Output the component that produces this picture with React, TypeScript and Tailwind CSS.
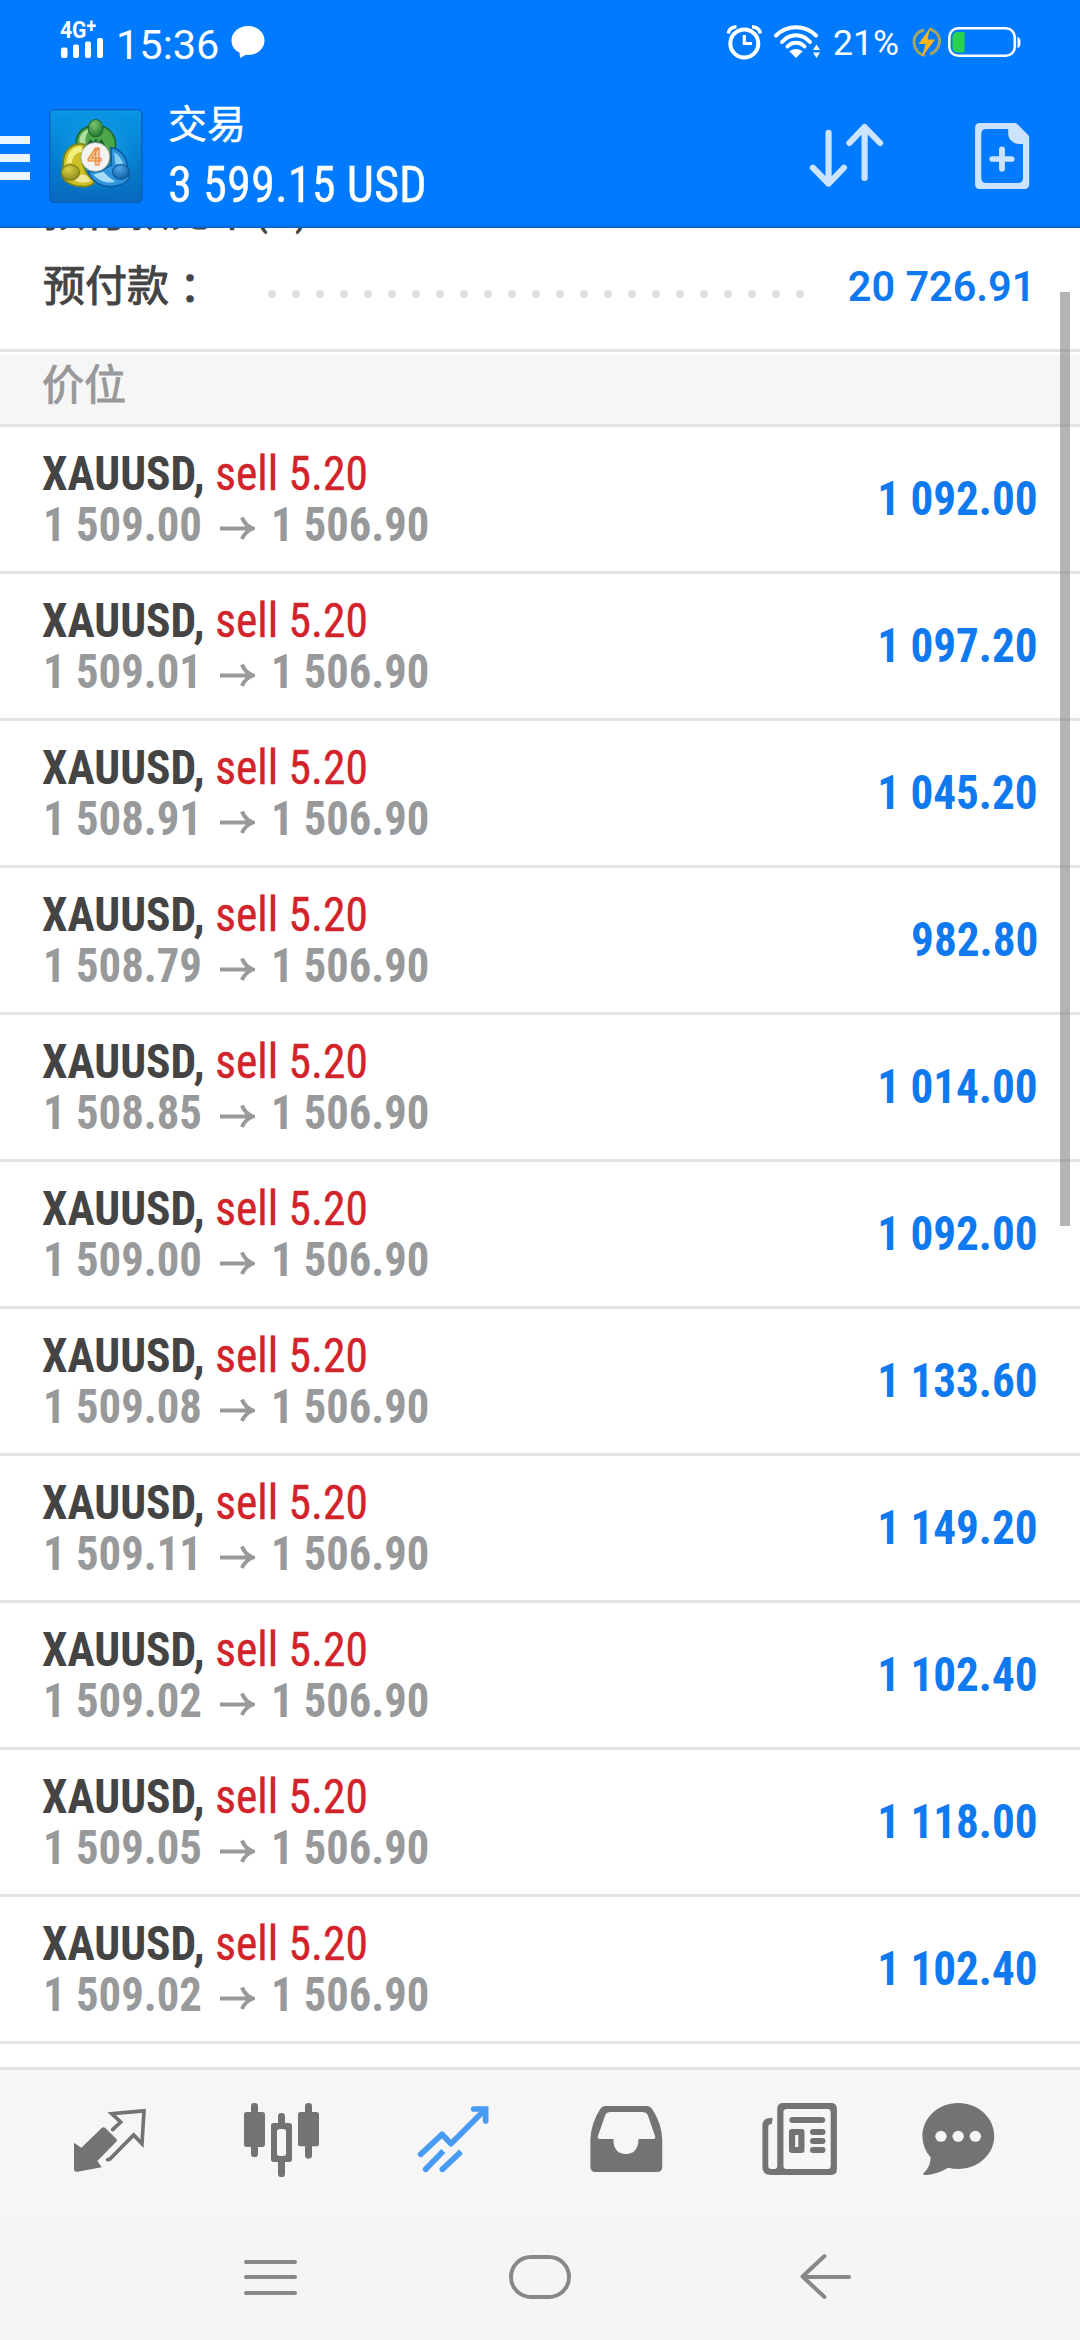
import React from "react";

const positions = [
  ["1 509.00", "1 092.00"],
  ["1 509.01", "1 097.20"],
  ["1 508.91", "1 045.20"],
  ["1 508.79", "982.80"],
  ["1 508.85", "1 014.00"],
  ["1 509.00", "1 092.00"],
  ["1 509.08", "1 133.60"],
  ["1 509.11", "1 149.20"],
  ["1 509.02", "1 102.40"],
  ["1 509.05", "1 118.00"],
  ["1 509.02", "1 102.40"],
];

function AppLogo() {
  return (
    <svg className="ml-[19px] h-[94px] w-[94px]" viewBox="28 43 280 280">
      <defs>
        <linearGradient id="bg" x1="0" y1="0" x2="0" y2="1">
          <stop offset="0" stopColor="#0a96e6" />
          <stop offset="0.5" stopColor="#0580d0" />
          <stop offset="1" stopColor="#0868bd" />
        </linearGradient>
        <radialGradient id="glow" cx="0.5" cy="0.45" r="0.5">
          <stop offset="0" stopColor="#25b4f0" />
          <stop offset="1" stopColor="#0a90e0" stopOpacity="0" />
        </radialGradient>
        <radialGradient id="green" cx="0.4" cy="0.3" r="0.8">
          <stop offset="0" stopColor="#7cc46c" />
          <stop offset="1" stopColor="#176c2c" />
        </radialGradient>
        <radialGradient id="yellow" cx="0.4" cy="0.3" r="0.8">
          <stop offset="0" stopColor="#dccf48" />
          <stop offset="1" stopColor="#858312" />
        </radialGradient>
        <radialGradient id="blue" cx="0.4" cy="0.3" r="0.8">
          <stop offset="0" stopColor="#4fa8e4" />
          <stop offset="1" stopColor="#0a559f" />
        </radialGradient>
      </defs>
      <rect x="30" y="45" width="275" height="276" rx="14" fill="url(#bg)" stroke="#0b5cbc" strokeWidth="4" />
      <rect x="34" y="49" width="267" height="268" rx="12" fill="url(#glow)" />
      <path d="M112 160C100 125 125 92 167 92C212 92 236 130 222 172L205 205L190 165L168 135L145 160Z" fill="#4da64a" stroke="#1c6a35" strokeWidth="5" />
      <path d="M120 150C112 120 135 103 152 104C138 116 134 130 138 148Z" fill="#b2dd9c" />
      <path d="M150 132L140 152L160 142ZM184 132L196 152L176 142Z" fill="#1f5f36" />
      <path d="M134 148C96 142 70 165 70 208L66 240C74 262 100 275 135 274C150 273 162 266 164 258L140 235L128 205Z" fill="#cdbf26" stroke="#77841b" strokeWidth="5" />
      <path d="M124 154C98 154 82 172 80 206L96 204C98 182 110 172 130 170Z" fill="#f4ee80" />
      <path d="M105 256C120 264 138 264 152 258L140 240L120 238Z" fill="#efe89a" />
      <path d="M212 158C240 160 264 190 262 225L268 245C262 262 240 276 205 274C175 272 155 255 144 230L180 228L214 210Z" fill="#2e94dc" stroke="#0d5da0" strokeWidth="5" />
      <path d="M222 172C240 184 250 202 250 212L226 206Z" fill="#8ccdf3" />
      <path d="M160 238C178 258 200 266 226 260L205 245L190 230Z" fill="#a6dcf8" />
      <ellipse cx="167" cy="100" rx="22" ry="26" fill="url(#green)" stroke="#1b6b30" strokeWidth="3" />
      <ellipse cx="92" cy="232" rx="27" ry="23" fill="url(#yellow)" stroke="#75791a" strokeWidth="3" />
      <ellipse cx="242" cy="230" rx="25" ry="22" fill="url(#blue)" stroke="#0c569c" strokeWidth="3" />
      <circle cx="166" cy="186" r="43" fill="#f4f3f4" stroke="#8a9a8a" strokeWidth="2" />
      <text x="164" y="211" textAnchor="middle" className="font-['Roboto'] font-bold" fontSize="74" fill="#fbd0a0" stroke="#ec8a3c" strokeWidth="3.500">4</text>
    </svg>
  );
}

function StatusBar() {
  return (
    <div className="flex h-[83px] items-start text-white">
      <div className="ml-[60px] mt-[18px] flex w-[44px] flex-col">
        <span className="h-[20px] origin-left scale-x-[0.88] whitespace-nowrap font-['Roboto'] text-[24px] font-bold leading-[25px]">
          4G<span className="relative -top-[5px] text-[20px]">+</span>
        </span>
        <svg className="h-[21px] w-[44px]" viewBox="0 0 44 21">
          <g fill="currentColor">
            <rect x="1" y="9.500" width="6.500" height="10.500" rx="2" />
            <rect x="13" y="6.500" width="6" height="13.500" rx="2" />
            <rect x="25" y="3.500" width="6" height="16.500" rx="2" />
            <rect x="37" y="0" width="6" height="20" rx="2" />
          </g>
        </svg>
      </div>
      <span className="ml-[12px] mt-[20px] w-[103px] whitespace-nowrap font-['Roboto'] text-[41.500px] leading-[50px]">15:36</span>
      <svg className="ml-[12px] mt-[26px] h-[32px] w-[34px]" viewBox="0 0 34 32">
        <path d="M17 0C26.500 0 33.500 6.500 33.500 14.500S26.500 29 17 29L15 28.800L9 32L8.500 26.500C3.500 24.500 0.500 20 0.500 14.500C0.500 6.500 7.500 0 17 0Z" fill="currentColor" />
      </svg>
      <svg className="ml-[461px] mt-[24px] h-[36px] w-[36px]" viewBox="0 0 36 36" fill="none" stroke="currentColor">
        <ellipse cx="18.300" cy="19.500" rx="14" ry="14" strokeWidth="4" />
        <path d="M18.300 11V19.500H26" strokeWidth="3.200" />
        <path d="M2.300 9.500C3 5 6.500 3 10.500 2.800M34.300 9.500C33.500 5 30 3 26 2.800" strokeWidth="3.500" />
      </svg>
      <svg className="ml-[11px] mt-[24px] h-[36px] w-[48px]" viewBox="0 0 48 36" fill="none" stroke="currentColor" strokeWidth="4" strokeLinecap="round">
        <path d="M3 11.500C14 0.500 32 0.500 43 11.500M9 18C17 9 29 9 37 18M14.500 22.500C19 17.500 27 17.500 31.500 22.500" />
        <path d="M17.500 27.500Q23 24 28.500 27.500L23 33Z" fill="currentColor" strokeWidth="1.500" />
        <path d="M43.500 20.500L47 26H40ZM43.500 34L47 28.500H40Z" fill="currentColor" stroke="none" />
      </svg>
      <span className="ml-[12px] mt-[20px] w-[70px] whitespace-nowrap font-['Roboto'] text-[35.500px] leading-[46px]">21%</span>
      <svg className="ml-[8px] mt-[27px] h-[31px] w-[32px]" viewBox="0 0 32 31" fill="none">
        <path d="M13 3C5 5 1 12 4 20C6 25 9 28 14 28M18 2C27 4 31 12 27 20C25 24 23 26 19 27" stroke="#a4a463" strokeWidth="3" />
        <path d="M19 1L7.500 17H14.500L11 30L24 12.500H16.500Z" fill="#ffb41c" />
      </svg>
      <svg className="ml-[5px] mt-[27px] h-[31px] w-[73px]" viewBox="0 0 73 31" fill="none">
        <rect x="1.300" y="1.300" width="65.500" height="27.500" rx="9" stroke="white" strokeWidth="2.600" />
        <path d="M16.500 5V25.500H10Q4.500 25.500 4.500 20V10.500Q4.500 5 10 5Z" fill="#2ad150" />
        <path d="M69.500 10Q72.500 10.500 72.500 15.500T69.500 21Z" fill="white" />
      </svg>
    </div>
  );
}

function Header() {
  return (
    <header className="relative z-10 h-[228px] bg-[#007aff] shadow-[inset_0_-3px_2px_-1px_#0866cc]">
      <StatusBar />
      <div className="flex h-[145px] items-start">
        <div className="mt-[53px] flex w-[30px] flex-col gap-[10px]">
          <div className="h-2 bg-[#ebf5ff]" />
          <div className="h-2 bg-[#ebf5ff]" />
          <div className="h-2 bg-[#ebf5ff]" />
        </div>
        <div className="mt-[26px]"><AppLogo /></div>
        <div className="ml-[25px] w-[300px] text-white">
          <div className="mt-[10px] font-['Noto_Sans_CJK_SC',sans-serif] text-[39px] leading-[56px] [-webkit-text-stroke:0.4px_currentColor]">交易</div>
          <div className="mt-[8px] w-max origin-left scale-x-[0.97] whitespace-nowrap font-['Roboto'] text-[50px] leading-[56px] [font-stretch:75%] [-webkit-text-stroke:0.3px_currentColor]">3 599.15 USD</div>
        </div>
        <svg className="ml-[339px] mt-[38px] h-[70px] w-[80px]" viewBox="774 363 232 210" preserveAspectRatio="none" fill="none" stroke="#cce4ff" strokeWidth="18" strokeLinecap="round" strokeLinejoin="round">
          <path d="M836.500 398V551M791 503L836.500 551L881 503M941 534V381M897 429L941 381L986 429" />
        </svg>
        <svg className="ml-[86px] mt-[38px] h-[70px] w-[60px]" viewBox="1257 363 174 210" preserveAspectRatio="none">
          <path fillRule="evenodd" d="M1278 369H1377Q1382 369 1386 373L1416 404Q1420 408 1420 413V553Q1420 567 1406 567H1277Q1263 567 1263 553V383Q1263 369 1278 369ZM1296 387Q1281 387 1281 402V534Q1281 549 1296 549H1387Q1402 549 1402 534V432H1390Q1359 428 1359 400V387Z" fill="#cce4ff" />
          <path d="M1341 448V506M1313 477H1369" stroke="#cce4ff" strokeWidth="17" strokeLinecap="round" />
        </svg>
      </div>
    </header>
  );
}

function AccountSummary() {
  return (
    <section className="h-[121px] text-[#444]">
      <div className="-mt-[50px] h-[50px] whitespace-nowrap pl-[43px] font-['Noto_Sans_CJK_SC',sans-serif] text-[42px] leading-[60px] [-webkit-text-stroke:1px_currentColor]">
        预付款比率<span className="relative -top-[1px] ml-[2px] inline-block origin-left scale-x-[0.88] font-['Roboto'] font-semibold [-webkit-text-stroke:0]">(%)</span>
        <span className="relative -top-[5px]">：</span>
      </div>
      <div className="flex h-[121px] items-start pl-[43px] pt-[25px]">
        <div className="w-[225px] whitespace-nowrap font-['Noto_Sans_CJK_SC',sans-serif] text-[42px] leading-[60px] [-webkit-text-stroke:1px_currentColor]">
          预付款<span className="relative top-[3px] font-['Noto_Sans_CJK_TC',sans-serif]">：</span>
        </div>
        <div className="mt-[37px] flex gap-4">
          {Array.from({ length: 23 }, (_, i) => (
            <i key={i} className="h-2 w-2 rounded-full bg-[#e0e0e0]" />
          ))}
        </div>
        <div className="ml-auto mr-[45px] mt-[3.500px] origin-right scale-x-[0.985] whitespace-nowrap font-['Roboto'] text-[42px] font-semibold leading-[60px] text-[#0f7af0]">20 726.91</div>
      </div>
    </section>
  );
}

function PositionRow({ open, profit }: { open: string; profit: string }) {
  return (
    <div className="flex h-[147px] items-start justify-between whitespace-nowrap border-b-[3px] border-[#e3e3e3] pl-[42px] pr-[42px] font-['Roboto'] text-[48px] font-bold leading-[51px] [font-stretch:75%]">
      <div className="pt-[21px]">
        <div className="w-max origin-left scale-x-[0.947] text-[#444]">
          XAUUSD, <span className="font-normal text-[#d2232a] [-webkit-text-stroke:0.4px_currentColor]">sell 5.20</span>
        </div>
        <div className="flex pl-px text-[#98999b]">
          <span className="w-[177px] origin-left scale-x-[0.932]">{open}</span>
          <svg className="mt-[17px] h-[24px] w-[35px]" viewBox="0 0 35 24" fill="none" stroke="currentColor" strokeWidth="4">
            <path d="M0 12.500H32M22 1.500Q25 9.500 33 12.500Q25 15.500 22 23" />
          </svg>
          <span className="ml-[16px] origin-left scale-x-[0.928]">1 506.90</span>
        </div>
      </div>
      <div className="mt-[46px] origin-right scale-x-[0.94] text-[#0f7af0]">{profit}</div>
    </div>
  );
}

function TabBar() {
  return (
    <nav className="flex h-[149px] items-start border-t-[3px] border-[#e2e2e2] bg-[#f6f6f6] pt-[30px] text-[#737373]">
      <svg className="ml-[72px] h-[80px] w-[76px]" viewBox="96 120 228 240">
        <path d="M102 248L124 263L186 203Q190 200 195 203L230 238Q232 241 230 244L172 303L185 322L112 335Q102 336 102 328Z" fill="currentColor" />
        <path d="M218 209L242 186L215 161L312 152.500L306 251L281 225L209 298L203 299" fill="none" stroke="currentColor" strokeWidth="11" strokeLinecap="round" />
      </svg>
      <svg className="ml-[94px] h-[80px] w-[80px]" viewBox="606 120 240 240" fill="currentColor">
        <rect x="633" y="129" width="21" height="162" rx="10" />
        <rect x="612" y="156" width="63" height="105" rx="8" />
        <rect x="795" y="129" width="21" height="167" rx="10" />
        <rect x="774" y="156" width="63" height="103" rx="8" />
        <rect x="714" y="159" width="21" height="45" rx="10" />
        <rect x="714" y="290" width="21" height="61" rx="10" />
        <path fillRule="evenodd" d="M701 189H748Q756 189 756 197V298Q756 306 748 306H701Q693 306 693 298V197Q693 189 701 189ZM719 207Q711 207 711 215V280Q711 288 719 288H730Q738 288 738 280V215Q738 207 730 207Z" />
      </svg>
      <svg className="ml-[93px] h-[80px] w-[76px]" viewBox="1126 120 228 240" fill="none" stroke="#479bf2" strokeWidth="17">
        <path d="M1143 283L1207 223L1234 251L1334 151" strokeLinejoin="round" strokeLinecap="round" />
        <path d="M1302 147H1338V183" strokeLinecap="round" />
        <path d="M1158 328L1211 273M1208 328L1264 275" />
        <circle cx="1158" cy="328" r="8.500" fill="#479bf2" stroke="none" />
        <circle cx="1208" cy="328" r="8.500" fill="#479bf2" stroke="none" />
      </svg>
      <svg className="ml-[97px] h-[80px] w-[77px]" viewBox="140 120 224 240" preserveAspectRatio="none" fill="currentColor">
        <path fillRule="evenodd" d="M190 138H312Q321 138 326 146Q355 190 356 240V320Q356 336 341 336H162Q147 336 147 320V240Q148 190 176 146Q181 138 190 138ZM205 156Q194 156 190 166L169 228Q166 237 175 237H214Q214 282 250 282Q286 282 287 237H329Q338 237 335 228L314 166Q310 156 297 156Z" />
      </svg>
      <svg className="ml-[95px] h-[80px] w-[80px]" viewBox="640 120 232 240" preserveAspectRatio="none" fill="currentColor">
        <path fillRule="evenodd" d="M708 129H846Q863 129 863 146V328Q863 345 846 345H672Q647 345 647 320V197Q647 175 670 174H677L674 192Q664 192 664 201V318Q664 327 673 327H682Q690 327 690 319V146Q690 129 708 129ZM718 147Q708 147 708 157V317Q708 327 718 327H835Q845 327 845 317V157Q845 147 835 147Z" />
        <rect x="725" y="171" width="104" height="18" rx="9" />
        <path fillRule="evenodd" d="M733 207H761Q769 207 769 215V271Q769 279 761 279H733Q724 279 724 271V215Q724 207 733 207ZM742 225V261H751V225Z" />
        <rect x="785" y="207" width="45" height="18" rx="9" />
        <rect x="785" y="234" width="45" height="18" rx="9" />
        <rect x="785" y="261" width="45" height="18" rx="9" />
      </svg>
      <svg className="ml-[80px] h-[80px] w-[77px]" viewBox="1102 120 224 240" preserveAspectRatio="none" fill="currentColor">
        <path d="M1213 129C1271 129 1318 173 1318 228S1271 327 1213 327Q1197 327 1184 323Q1152 343 1116 345Q1108 344 1113 339Q1132 322 1133 292Q1109 265 1109 228C1109 173 1156 129 1213 129Z" />
        <g fill="#f6f6f6">
          <circle cx="1163" cy="229" r="16.500" />
          <circle cx="1213" cy="229" r="16.500" />
          <circle cx="1263" cy="229" r="16.500" />
        </g>
      </svg>
    </nav>
  );
}

function SystemNav() {
  return (
    <div className="flex h-[124px] items-start bg-[#f5f5f5] pt-[35px]">
      <svg className="ml-[242px] h-[52px] w-[57px]" viewBox="0 0 57 52" stroke="#888" strokeWidth="4" strokeLinecap="round">
        <path d="M4 11H53M4 26H53M4 42H53" />
      </svg>
      <div className="ml-[210px] mt-1 h-[44px] w-[62px] rounded-full border-4 border-[#888]" />
      <svg className="ml-[227px] h-[52px] w-[57px]" viewBox="0 0 57 52" fill="none" stroke="#888" strokeWidth="4" strokeLinecap="round" strokeLinejoin="round">
        <path d="M26.500 5L4.500 25.500L26.500 46M6 26H51" />
      </svg>
    </div>
  );
}

export default function App() {
  return (
    <div className="relative flex h-[2340px] w-[1080px] flex-col overflow-hidden bg-white">
      <Header />
      <AccountSummary />
      <div className="h-[78px] border-y-[3px] border-[#e3e3e3] bg-[#f6f6f6] shadow-[inset_0_3px_0_white]">
        <div className="pl-[42px] font-['Noto_Sans_CJK_SC',sans-serif] text-[42px] leading-[60px] text-[#98999b] [-webkit-text-stroke:1px_currentColor]">价位</div>
      </div>
      {positions.map(([open, profit], i) => (
        <PositionRow key={i} open={open} profit={profit} />
      ))}
      <div className="h-[23px]" />
      <TabBar />
      <SystemNav />
      <div className="absolute right-[10px] top-[292px] h-[934px] w-[10px] bg-[#828282]/60" />
    </div>
  );
}
